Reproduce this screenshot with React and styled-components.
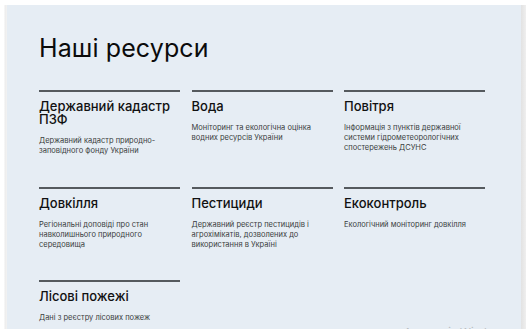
import React from 'react';
import styled, { createGlobalStyle } from 'styled-components';

const GlobalStyle = createGlobalStyle`
  html, body {
    margin: 0;
    padding: 0;
    background: #ffffff;
    overflow: hidden;
  }
  body {
    font-family: Inter, "Noto Sans", Arial, sans-serif;
  }
`;

const Page = styled.div`
  display: flex;
  width: 526px;
  height: 329px;
  padding-top: 5px;
  box-sizing: border-box;
  background: #ffffff;
  position: relative;
  overflow: hidden;
`;

const LeftGutter = styled.div`
  width: 7px;
  flex: none;
  background: linear-gradient(to right, #ffffff 0, #ffffff 4px, #ececec 5px, #f3f3f3 7px);
`;

const RightGutter = styled.div`
  width: 5px;
  flex: none;
  background: linear-gradient(to right, #e2e2e2, #efefef);
`;

const Panel = styled.section`
  flex: 1;
  background: #e6edf4;
  padding: 28px 0 0 32px;
  box-sizing: border-box;
`;

const Heading = styled.h1`
  margin: 0 0 27px;
  font-size: 25px;
  line-height: 30px;
  font-weight: 400;
  color: #0b0b0b;
  letter-spacing: 0.1px;
`;

const Grid = styled.div`
  display: grid;
  grid-template-columns: repeat(3, 141px);
  column-gap: 11.5px;
  row-gap: 30.5px;
`;

const Card = styled.div`
  border-top: 2px solid #555a5e;
  padding-top: 8px;
`;

const Title = styled.h2`
  margin: 0 0 10px;
  font-size: 13px;
  line-height: 13px;
  font-weight: 500;
  color: #111111;
`;

const Desc = styled.p`
  margin: 0;
  font-size: 7.5px;
  line-height: 10px;
  color: #3a3d40;
`;

const Watermark = styled.div`
  position: absolute;
  right: 18px;
  top: 325px;
  font-size: 11px;
  color: #b8bcc0;
`;

const resources = [
  { title: 'Державний кадастр ПЗФ', desc: 'Державний кадастр природно-заповідного фонду України' },
  { title: 'Вода', desc: 'Моніторинг та екологічна оцінка водних ресурсів України' },
  { title: 'Повітря', desc: 'Інформація з пунктів державної системи гідрометеорологічних спостережень ДСУНС' },
  { title: 'Довкілля', desc: 'Регіональні доповіді про стан навколишнього природного середовища' },
  { title: 'Пестициди', desc: 'Державний реєстр пестицидів і агрохімікатів, дозволених до використання в Україні' },
  { title: 'Екоконтроль', desc: 'Екологічний моніторинг довкілля' },
  { title: 'Лісові пожежі', desc: 'Дані з реєстру лісових пожеж' },
];

const App = () => {
  return (
    <>
      <GlobalStyle />
      <Page>
        <LeftGutter />
        <Panel>
          <Heading>Наші ресурси</Heading>
          <Grid>
            {resources.map((r) => (
              <Card key={r.title}>
                <Title>{r.title}</Title>
                <Desc>{r.desc}</Desc>
              </Card>
            ))}
          </Grid>
        </Panel>
        <RightGutter />
        <Watermark>Активація Windows</Watermark>
      </Page>
    </>
  );
};

export default App;
